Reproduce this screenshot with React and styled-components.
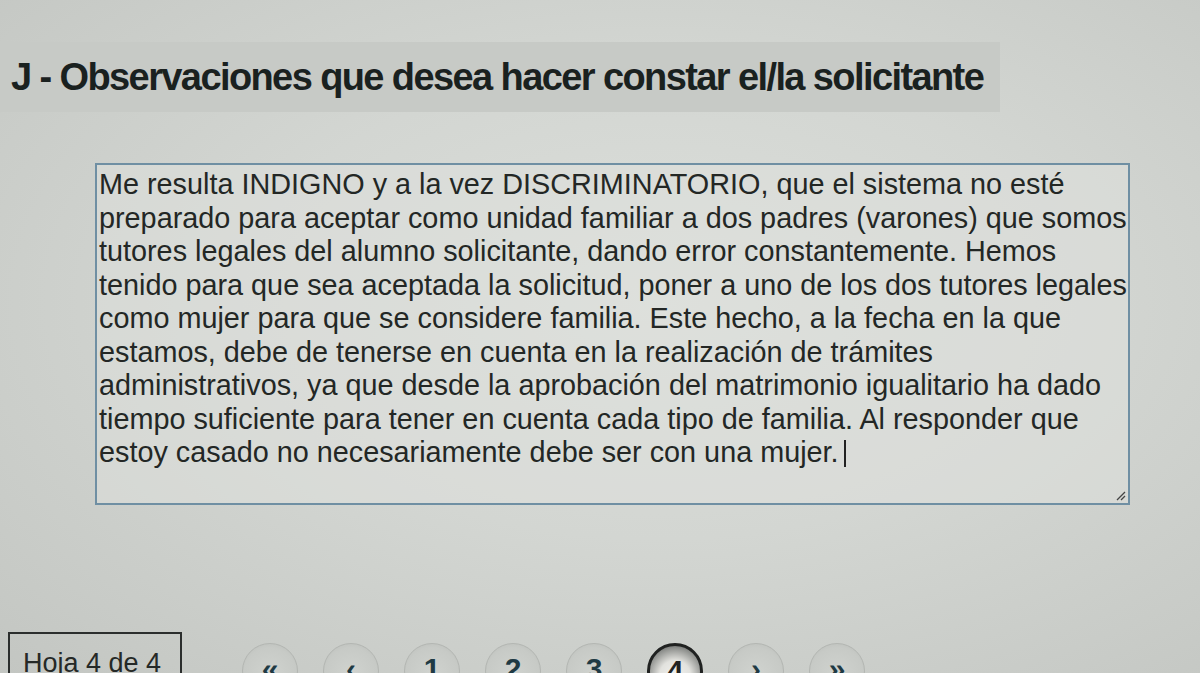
import React from "react";
import styled, { createGlobalStyle } from "styled-components";

const GlobalStyle = createGlobalStyle`
  html, body {
    margin: 0;
    padding: 0;
  }
  body {
    width: 1200px;
    height: 673px;
    overflow: hidden;
    background: radial-gradient(ellipse at 55% 45%, #dcdfdb 0%, #d3d6d2 45%, #c3c6c2 100%);
    font-family: "Liberation Sans", Arial, sans-serif;
    color: #1f2321;
  }
`;

const Page = styled.div`
  display: flex;
  flex-direction: column;
  height: 673px;
  & > * {
    flex-shrink: 0;
  }
`;

const SectionBar = styled.div`
  margin-top: 42px;
  width: 1000px;
  height: 70px;
  box-sizing: border-box;
  padding-left: 11px;
  display: flex;
  align-items: center;
  background: #c7cac6;
`;

const SectionTitle = styled.h2`
  margin: 0;
  font-size: 38px;
  font-weight: bold;
  letter-spacing: -1.6px;
  color: #1a211f;
  white-space: nowrap;
`;

const TextBox = styled.div`
  margin: 51px 0 0 95px;
  width: 1035px;
  height: 342px;
  box-sizing: border-box;
  border: 2px solid #6f8fa3;
  padding: 3px 0 0 2px;
  position: relative;
  background: rgba(222, 224, 221, 0.55);
  font-size: 28.8px;
  line-height: 33.5px;
  color: #232725;
  white-space: nowrap;
`;

const Line = styled.div``;

const Caret = styled.span`
  display: inline-block;
  width: 2px;
  height: 27px;
  margin-left: 5px;
  vertical-align: -5px;
  background: #222;
`;

const Grip = styled.svg`
  position: absolute;
  right: 2px;
  bottom: 2px;
`;

const Footer = styled.div`
  margin-top: 127px;
  display: flex;
  align-items: flex-start;
  padding-left: 8px;
`;

const SheetLabel = styled.div`
  width: 174px;
  height: 60px;
  box-sizing: border-box;
  border: 2px solid #2b2e2d;
  border-bottom: none;
  padding: 14px 0 0 13px;
  font-size: 27px;
  color: #252927;
`;

const Pager = styled.div`
  display: flex;
  gap: 25px;
  margin: 11px 0 0 60px;
`;

const PageButton = styled.div`
  width: 56px;
  height: 56px;
  box-sizing: border-box;
  border-radius: 50%;
  display: flex;
  justify-content: center;
  padding-top: 8px;
  font-size: 30px;
  font-weight: bold;
  background: ${(p) =>
    p.$active
      ? "radial-gradient(circle at 50% 60%, #f2f2ef 0%, #e2e2de 40%, #8d8f8c 72%, #2a2c2b 100%)"
      : "radial-gradient(circle at 50% 55%, #d0d3cf 0%, #c7cac6 65%, #b6b9b5 100%)"};
  border: ${(p) => (p.$active ? "3px solid #202221" : "1px solid #b3b6b2")};
  color: ${(p) => (p.$active ? "#222" : "#1f3a44")};
`;

const lines = [
  "Me resulta INDIGNO y a la vez DISCRIMINATORIO, que el sistema no esté",
  "preparado para aceptar como unidad familiar a dos padres (varones) que somos",
  "tutores legales del alumno solicitante, dando error constantemente. Hemos",
  "tenido para que sea aceptada la solicitud, poner a uno de los dos tutores legales",
  "como mujer para que se considere familia. Este hecho, a la fecha en la que",
  "estamos, debe de tenerse en cuenta en la realización de trámites",
  "administrativos, ya que desde la aprobación del matrimonio igualitario ha dado",
  "tiempo suficiente para tener en cuenta cada tipo de familia. Al responder que",
];

const pages = ["«", "‹", "1", "2", "3", "4", "›", "»"];

export default function App() {
  return (
    <>
      <GlobalStyle />
      <Page>
        <SectionBar>
          <SectionTitle>J - Observaciones que desea hacer constar el/la solicitante</SectionTitle>
        </SectionBar>
        <TextBox>
          {lines.map((l) => (
            <Line key={l}>{l}</Line>
          ))}
          <Line>
            estoy casado no necesariamente debe ser con una mujer.
            <Caret />
          </Line>
          <Grip width="12" height="12" viewBox="0 0 12 12">
            <path d="M11 3 L3 11 M11 7 L7 11" stroke="#444" strokeWidth="1.3" />
          </Grip>
        </TextBox>
        <Footer>
          <SheetLabel>Hoja 4 de 4</SheetLabel>
          <Pager>
            {pages.map((p) => (
              <PageButton key={p} $active={p === "4"}>
                {p}
              </PageButton>
            ))}
          </Pager>
        </Footer>
      </Page>
    </>
  );
}
